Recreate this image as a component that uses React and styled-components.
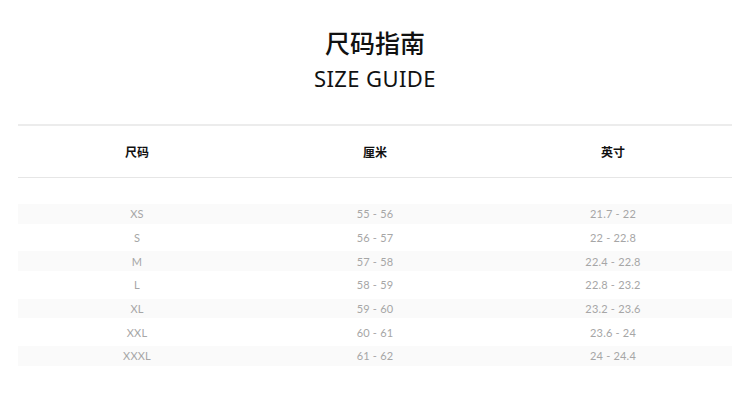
import React from "react";
import styled, { createGlobalStyle } from "styled-components";

const Global = createGlobalStyle`
  html, body { margin: 0; padding: 0; background: #fff; }
  body { font-family: Lato, "Noto Sans", "Noto Sans CJK SC", sans-serif; }
`;

const Page = styled.div`
  width: 750px;
  height: 397px;
  box-sizing: border-box;
  padding: 0 18px;
  display: flex;
  flex-direction: column;
`;

const Heading = styled.header`
  display: flex;
  flex-direction: column;
  align-items: center;
  padding-top: 27px;
  height: 124px;
  box-sizing: border-box;
`;

const TitleCn = styled.h1`
  margin: 0;
  font-family: "Noto Sans CJK SC", sans-serif;
  font-weight: 500;
  font-size: 25px;
  line-height: 30px;
  color: #111;
  letter-spacing: 0;
`;

const TitleEn = styled.h2`
  margin: 7px 0 0;
  font-family: "Noto Sans", sans-serif;
  font-weight: 400;
  font-size: 22px;
  line-height: 28px;
  color: #111;
  letter-spacing: 0.4px;
`;

const Table = styled.div`
  border-top: 2px solid #ececec;
  display: flex;
  flex-direction: column;
`;

const HeadRow = styled.div`
  display: grid;
  grid-template-columns: repeat(3, 1fr);
  height: 51px;
  align-items: center;
  border-bottom: 1px solid #e6e6e6;
`;

const HeadCell = styled.div`
  text-align: center;
  font-family: "Noto Sans CJK SC", sans-serif;
  font-weight: 700;
  font-size: 12px;
  color: #111;
`;

const Body = styled.div`
  display: flex;
  flex-direction: column;
  gap: 4px;
  padding-top: 26px;
`;

const Row = styled.div`
  display: grid;
  grid-template-columns: repeat(3, 1fr);
  height: 19.67px;
  align-items: center;
  background: ${(p) => (p.$striped ? "#fafafa" : "transparent")};
`;

const Cell = styled.div`
  text-align: center;
  font-family: Lato, sans-serif;
  font-size: 11px;
  color: #a6a6a6;
  letter-spacing: 0.2px;
`;

const rows = [
  ["XS", "55 - 56", "21.7 - 22"],
  ["S", "56 - 57", "22 - 22.8"],
  ["M", "57 - 58", "22.4 - 22.8"],
  ["L", "58 - 59", "22.8 - 23.2"],
  ["XL", "59 - 60", "23.2 - 23.6"],
  ["XXL", "60 - 61", "23.6 - 24"],
  ["XXXL", "61 - 62", "24 - 24.4"],
];

export default function App() {
  return (
    <>
      <Global />
      <Page>
        <Heading>
          <TitleCn>尺码指南</TitleCn>
          <TitleEn>SIZE GUIDE</TitleEn>
        </Heading>
        <Table>
          <HeadRow>
            <HeadCell>尺码</HeadCell>
            <HeadCell>厘米</HeadCell>
            <HeadCell>英寸</HeadCell>
          </HeadRow>
          <Body>
            {rows.map((r, i) => (
              <Row key={r[0]} $striped={i % 2 === 0}>
                {r.map((c, j) => (
                  <Cell key={j}>{c}</Cell>
                ))}
              </Row>
            ))}
          </Body>
        </Table>
      </Page>
    </>
  );
}
